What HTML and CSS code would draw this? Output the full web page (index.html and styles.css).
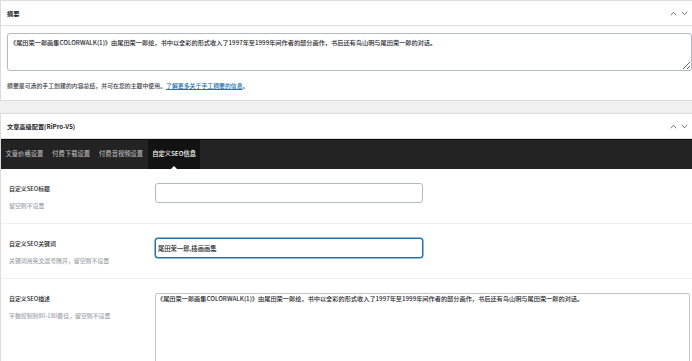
FILE: index.html
```html
<!DOCTYPE html>
<html lang="zh-CN">
<head>
    <meta charset="utf-8">
    <title>文章编辑</title>
    <link rel="stylesheet" href="styles.css">
</head>
<body>
    <div class="wrap">
        <div class="postbox">
            <div class="postbox-header">
                <h2>摘要</h2>
                <div class="handle-actions">
                    <svg viewBox="0 0 8 5"><polyline points="1,4.5 4,1 7,4.5"/></svg>
                    <svg viewBox="0 0 8 5"><polyline points="1,0.5 4,4 7,0.5"/></svg>
                </div>
            </div>
            <div class="inside">
                <textarea class="excerpt">《尾田荣一郎画集COLORWALK(1)》由尾田荣一郎绘，书中以全彩的形式收入了1997年至1999年间作者的部分画作，书后还有鸟山明与尾田荣一郎的对话。</textarea>
                <p class="help">摘要是可选的手工创建的内容总结，并可在您的主题中使用。<a href="#">了解更多关于手工摘要的信息</a>。</p>
            </div>
        </div>

        <div class="postbox second">
            <div class="postbox-header">
                <h2>文章高级配置(RiPro-V5)</h2>
                <div class="handle-actions">
                    <svg viewBox="0 0 8 5"><polyline points="1,4.5 4,1 7,4.5"/></svg>
                    <svg viewBox="0 0 8 5"><polyline points="1,0.5 4,4 7,0.5"/></svg>
                </div>
            </div>
            <div class="tabs">
                <div class="tab">文章价格设置</div>
                <div class="tab">付费下载设置</div>
                <div class="tab">付费音视频设置</div>
                <div class="tab active">自定义SEO信息</div>
            </div>
            <div class="fields">
                <div class="field">
                    <div class="field-label">
                        <div class="field-title">自定义SEO标题</div>
                        <div class="field-desc">留空则不设置</div>
                    </div>
                    <input class="text-input" type="text" value="">
                </div>
                <div class="field">
                    <div class="field-label">
                        <div class="field-title">自定义SEO关键词</div>
                        <div class="field-desc">关键词用英文逗号隔开，留空则不设置</div>
                    </div>
                    <input class="text-input focused" type="text" value="尾田荣一郎,插画画集">
                </div>
                <div class="field last">
                    <div class="field-label">
                        <div class="field-title">自定义SEO描述</div>
                        <div class="field-desc">字数控制到80-180最佳，留空则不设置</div>
                    </div>
                    <textarea class="text-area">《尾田荣一郎画集COLORWALK(1)》由尾田荣一郎绘，书中以全彩的形式收入了1997年至1999年间作者的部分画作，书后还有鸟山明与尾田荣一郎的对话。</textarea>
                </div>
            </div>
        </div>
    </div>
</body>
</html>
```

FILE: styles.css
```css
html, body {
    margin: 0;
    padding: 0;
    overflow: hidden;
}

body {
    font-family: "Noto Sans CJK SC", "Noto Sans", sans-serif;
    font-weight: 500;
    background-color: #f0f0f1;
    color: #1d2327;
}

.wrap {
    width: 700px;
}

.postbox {
    background-color: #ffffff;
    border: 1px solid #dcdcde;
}

.postbox.second {
    margin-top: 12px;
}

.postbox-header {
    display: flex;
    align-items: center;
    justify-content: space-between;
    height: 24px;
    padding: 0 11px 0 6px;
    border-bottom: 1px solid #dcdcde;
}

.postbox-header h2 {
    margin: 0;
    font-size: 6.2px;
    font-weight: 700;
    color: #1d2327;
}

.handle-actions {
    display: flex;
    gap: 4px;
}

.handle-actions svg {
    width: 7px;
    height: 5px;
    fill: none;
    stroke: #50575e;
    stroke-width: 0.9;
}

.inside {
    padding: 7px 7px 9px 6px;
}

.excerpt {
    display: block;
    box-sizing: border-box;
    width: 100%;
    height: 38px;
    margin: 0;
    padding: 4px 2px;
    border: 1px solid #b4b9be;
    border-radius: 3px;
    font-family: inherit;
    font-weight: 500;
    font-size: 6.2px;
    line-height: 10px;
    color: #1d2327;
    resize: vertical;
}

.help {
    margin: 10px 0 0;
    font-size: 5.9px;
    line-height: 10px;
    color: #3c434a;
}

.help a {
    color: #2271b1;
    text-decoration: underline;
}

.tabs {
    display: flex;
    height: 29px;
    background-color: #232323;
    border-top: 1px solid #0c0c0c;
}

.tab {
    position: relative;
    padding: 0 4.5px;
    line-height: 28px;
    font-size: 6.3px;
    color: #b4b4b4;
}

.tab.active {
    background-color: #121212;
    color: #ffffff;
}

.tab.active::after {
    content: "";
    position: absolute;
    left: 50%;
    bottom: 0;
    margin-left: -3px;
    border: 3px solid transparent;
    border-bottom-color: #ffffff;
}

.field {
    display: flex;
    padding: 14px 0 11px 8px;
    border-bottom: 1px solid #f0f0f1;
}

.field.last {
    border-bottom: none;
}

.field-label {
    width: 146px;
    flex-shrink: 0;
}

.field-title {
    font-size: 5.9px;
    line-height: 12px;
    color: #1d2327;
}

.field-desc {
    margin-top: 5px;
    font-size: 5.9px;
    line-height: 12px;
    color: #a0a5aa;
}

.text-input {
    box-sizing: border-box;
    width: 268px;
    height: 20px;
    margin: 0;
    padding: 0 2px;
    border: 1px solid #b4b9be;
    border-radius: 3px;
    font-family: inherit;
    font-weight: 500;
    font-size: 6.3px;
    color: #1d2327;
    outline: none;
}

.text-input.focused {
    border-color: #2271b1;
    box-shadow: 0 0 0 0.5px #2271b1;
}

.text-area {
    box-sizing: border-box;
    width: 535px;
    height: 90px;
    margin: 0;
    padding: 1px 1px;
    border: 1px solid #c3c4c7;
    border-radius: 2px;
    font-family: inherit;
    font-weight: 500;
    font-size: 6.2px;
    line-height: 8px;
    color: #1d2327;
    resize: vertical;
}
```
